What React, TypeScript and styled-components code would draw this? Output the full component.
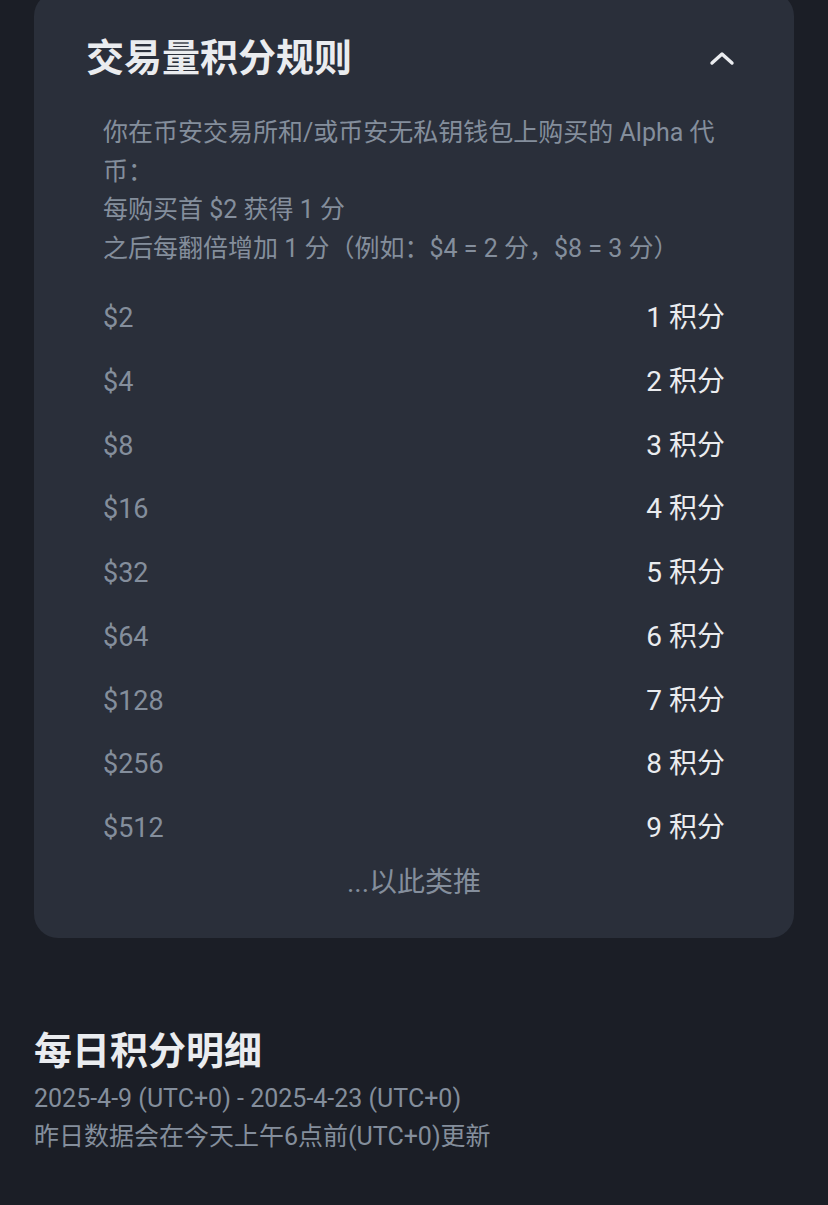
import React from 'react'
import styled, { createGlobalStyle } from 'styled-components'

const GlobalStyle = createGlobalStyle`
  html, body {
    margin: 0;
    padding: 0;
    background-color: #1b1e26;
  }

  body {
    font-family: Roboto, "Noto Sans CJK SC", sans-serif;
    -webkit-font-smoothing: antialiased;
  }
`

const Page = styled.main`
  min-height: 1205px;
  overflow: hidden;
  padding: 0 34px;
`

const Card = styled.section`
  background-color: #2a2f3a;
  border-radius: 24px;
  margin-top: -8px;
  padding: 40px 0 32px;
`

const CardHeader = styled.header`
  align-items: center;
  display: flex;
  justify-content: space-between;
  padding: 0 52px;
`

const Title = styled.h2`
  color: #eaecef;
  font-size: 38px;
  font-weight: 700;
  line-height: 52px;
  margin: 0;
`

const Toggle = styled.button`
  align-items: center;
  background: none;
  border: 0;
  color: #eaecef;
  display: flex;
  height: 40px;
  justify-content: center;
  padding: 0;
  width: 40px;
`

const Body = styled.div`
  padding: 30px 69px 0;
`

const Intro = styled.p`
  color: #848e9c;
  font-size: 25px;
  line-height: 38.5px;
  margin: 0 0 18px;
`

const Row = styled.div`
  align-items: baseline;
  display: flex;
  font-size: 27px;
  height: 63.75px;
  justify-content: space-between;
  line-height: 63.75px;
`

const Amount = styled.span`
  color: #848e9c;
`

const Points = styled.span`
  color: #eaecef;
  font-size: 28px;
`

const More = styled.div`
  color: #848e9c;
  font-size: 28px;
  line-height: 46px;
  text-align: center;
`

const Daily = styled.section`
  padding-top: 87px;
`

const DailyTitle = styled.h2`
  color: #eaecef;
  font-size: 38px;
  font-weight: 700;
  line-height: 53px;
  margin: 0 0 2px;
`

const Note = styled.p`
  color: #848e9c;
  font-size: 25px;
  line-height: 38px;
  margin: 0;
`

const tiers = [2, 4, 8, 16, 32, 64, 128, 256, 512]

const ChevronUp = () => (
  <svg width="26" height="16" viewBox="0 0 26 16" fill="none">
    <path d="M3 13L13 4L23 13" stroke="currentColor" strokeWidth="3.4" strokeLinecap="round" strokeLinejoin="round" />
  </svg>
)

const App = () => (
  <>
    <GlobalStyle />
    <Page>
      <Card>
        <CardHeader>
          <Title>交易量积分规则</Title>
          <Toggle aria-label="收起">
            <ChevronUp />
          </Toggle>
        </CardHeader>

        <Body>
          <Intro>
            你在币安交易所和/或币安无私钥钱包上购买的 Alpha 代币：
            <br />
            每购买首 $2 获得 1 分
            <br />
            之后每翻倍增加 1 分（例如：$4 = 2 分，$8 = 3 分）
          </Intro>

          {tiers.map((amount, i) => (
            <Row key={amount}>
              <Amount>${amount}</Amount>
              <Points>{i + 1} 积分</Points>
            </Row>
          ))}

          <More>...以此类推</More>
        </Body>
      </Card>

      <Daily>
        <DailyTitle>每日积分明细</DailyTitle>
        <Note>2025-4-9 (UTC+0) - 2025-4-23 (UTC+0)</Note>
        <Note>昨日数据会在今天上午6点前(UTC+0)更新</Note>
      </Daily>
    </Page>
  </>
)

export default App
